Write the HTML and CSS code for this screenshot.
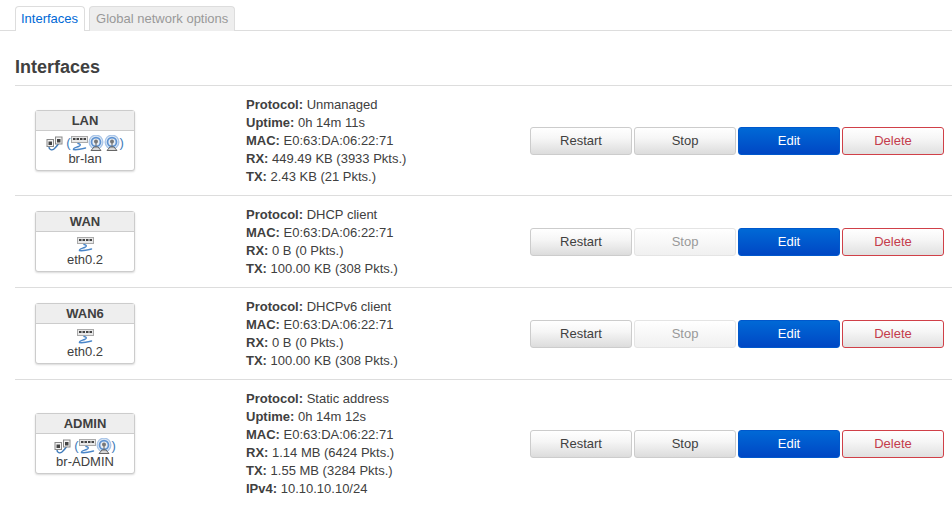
FILE: index.html
```html
<!DOCTYPE html>
<html lang="en">
<head>
    <meta charset="UTF-8">
    <title>Interfaces</title>
    <link rel="stylesheet" href="styles.css">
</head>
<body>
<svg class="defs" width="0" height="0">
    <symbol id="bridge" viewBox="0 0 17 15">
        <path d="M3 11c0 3 3 3.500 5 2s3-3 5-6" fill="none" stroke="#3d79b8" stroke-width="1.400"/>
        <rect x="1" y="3.500" width="6.500" height="7" fill="#f4f4f4" stroke="#888"/>
        <rect x="9.500" y="1" width="6.500" height="7" fill="#f4f4f4" stroke="#888"/>
        <rect x="2.500" y="5.500" width="3.500" height="3.500" fill="#444"/>
        <rect x="11" y="3" width="3.500" height="3.500" fill="#444"/>
    </symbol>
    <symbol id="switch" viewBox="0 0 17 15">
        <rect x=".5" y=".5" width="16" height="6" fill="#e8e8e8" stroke="#aaa"/>
        <path d="M2 3h2.500M5.500 3h2.500M9 3h2.500M12.500 3h2.500" stroke="#444" stroke-width="2"/>
        <path d="M7 7.500c3 .5 3 2 .5 3S2 12 2.500 13.500c3 .5 8-.5 12-1.500" fill="none" stroke="#4a86c8" stroke-width="1.500" stroke-linecap="round"/>
    </symbol>
    <symbol id="wifi" viewBox="0 0 16 16">
        <circle cx="8" cy="7" r="7.500" fill="#a9c5e8"/>
        <circle cx="8" cy="7" r="6.200" fill="#dce8f5"/>
        <circle cx="8" cy="7" r="5.300" fill="#5f93d2"/>
        <circle cx="8" cy="7" r="3.600" fill="#e8edf2"/>
        <circle cx="8" cy="6.500" r="2" fill="#777"/>
        <path d="M8 8v4M3 15.500l3-3.500h4l3 3.500z" fill="#d8d8d8" stroke="#666"/>
    </symbol>
</svg>
<div class="tabs">
    <a href="#" class="tab active">Interfaces</a>
    <a href="#" class="tab">Global network options</a>
</div>
<h3>Interfaces</h3>
<div class="list">
    <div class="row">
        <div class="badge">
            <div class="badge-title">LAN</div>
            <div class="badge-body">
                <div class="icons">
                    <svg class="ic-bridge"><use href="#bridge"/></svg>
                    <span class="paren first">(</span>
                    <svg class="ic-switch"><use href="#switch"/></svg>
                    <svg class="ic-wifi"><use href="#wifi"/></svg>
                    <svg class="ic-wifi"><use href="#wifi"/></svg>
                    <span class="paren">)</span>
                </div>
                br-lan
            </div>
        </div>
        <div class="info">
            <div><b>Protocol:</b> Unmanaged</div>
            <div><b>Uptime:</b> 0h 14m 11s</div>
            <div><b>MAC:</b> E0:63:DA:06:22:71</div>
            <div><b>RX:</b> 449.49 KB (3933 Pkts.)</div>
            <div><b>TX:</b> 2.43 KB (21 Pkts.)</div>
        </div>
        <div class="actions">
            <button class="btn">Restart</button>
            <button class="btn">Stop</button>
            <button class="btn edit">Edit</button>
            <button class="btn delete">Delete</button>
        </div>
    </div>
    <div class="row">
        <div class="badge">
            <div class="badge-title">WAN</div>
            <div class="badge-body">
                <div class="icons">
                    <svg class="ic-switch"><use href="#switch"/></svg>
                </div>
                eth0.2
            </div>
        </div>
        <div class="info">
            <div><b>Protocol:</b> DHCP client</div>
            <div><b>MAC:</b> E0:63:DA:06:22:71</div>
            <div><b>RX:</b> 0 B (0 Pkts.)</div>
            <div><b>TX:</b> 100.00 KB (308 Pkts.)</div>
        </div>
        <div class="actions">
            <button class="btn">Restart</button>
            <button class="btn" disabled>Stop</button>
            <button class="btn edit">Edit</button>
            <button class="btn delete">Delete</button>
        </div>
    </div>
    <div class="row">
        <div class="badge">
            <div class="badge-title">WAN6</div>
            <div class="badge-body">
                <div class="icons">
                    <svg class="ic-switch"><use href="#switch"/></svg>
                </div>
                eth0.2
            </div>
        </div>
        <div class="info">
            <div><b>Protocol:</b> DHCPv6 client</div>
            <div><b>MAC:</b> E0:63:DA:06:22:71</div>
            <div><b>RX:</b> 0 B (0 Pkts.)</div>
            <div><b>TX:</b> 100.00 KB (308 Pkts.)</div>
        </div>
        <div class="actions">
            <button class="btn">Restart</button>
            <button class="btn" disabled>Stop</button>
            <button class="btn edit">Edit</button>
            <button class="btn delete">Delete</button>
        </div>
    </div>
    <div class="row">
        <div class="badge">
            <div class="badge-title">ADMIN</div>
            <div class="badge-body">
                <div class="icons">
                    <svg class="ic-bridge"><use href="#bridge"/></svg>
                    <span class="paren first">(</span>
                    <svg class="ic-switch"><use href="#switch"/></svg>
                    <svg class="ic-wifi"><use href="#wifi"/></svg>
                    <span class="paren">)</span>
                </div>
                br-ADMIN
            </div>
        </div>
        <div class="info">
            <div><b>Protocol:</b> Static address</div>
            <div><b>Uptime:</b> 0h 14m 12s</div>
            <div><b>MAC:</b> E0:63:DA:06:22:71</div>
            <div><b>RX:</b> 1.14 MB (6424 Pkts.)</div>
            <div><b>TX:</b> 1.55 MB (3284 Pkts.)</div>
            <div><b>IPv4:</b> 10.10.10.10/24</div>
        </div>
        <div class="actions">
            <button class="btn">Restart</button>
            <button class="btn">Stop</button>
            <button class="btn edit">Edit</button>
            <button class="btn delete">Delete</button>
        </div>
    </div>
</div>
</body>
</html>
```

FILE: styles.css
```css
*{margin: 0;padding: 0;box-sizing: border-box;}
body{background: #fff;color: #404040;font-family: "Liberation Sans", Arial, sans-serif;font-size: 13px;line-height: 18px;overflow: hidden;}
a{text-decoration: none;}
.defs{position: absolute;}

.tabs{display: flex;gap: 4px;height: 31px;padding: 6px 0 0 15px;border-bottom: 1px solid #ddd;}
.tab{height: 25px;padding: 0 6px;line-height: 24px;color: #999;background: #eee;border: 1px solid #ddd;border-bottom: 0;border-radius: 4px 4px 0 0;}
.tab.active{padding-left: 5px;color: #0069d6;background: #fff;}

h3{margin: 0 0 0 15px;height: 54px;padding-top: 24px;font-size: 18px;line-height: 24px;color: #404040;}

.list{margin-left: 15px;}
.row{display: grid;grid-template-columns: 231px 1fr 414px;align-items: center;padding: 10px 8px 9px 0;border-top: 1px solid #ddd;}
.badge{width: 100px;margin: 0 0 2px 20px;background: #fff;border: 1px solid #ccc;border-radius: 3px;box-shadow: 0 1px 2px rgba(0,0,0,.15);text-align: center;}
.badge-title{height: 20px;line-height: 19px;font-weight: bold;background: #eee;border-bottom: 1px solid #ccc;}
.badge-body{padding: 3px 0;line-height: 16px;}
.icons{display: flex;justify-content: center;align-items: flex-end;height: 17px;}
.ic-bridge{width: 17px;height: 15px;}
.ic-switch{width: 17px;height: 15px;}
.ic-wifi{width: 16px;height: 16px;}
.paren{font-size: 13px;line-height: 16px;color: #3d79b8;}
.paren.first{margin-left: 3px;}

.info b{font-weight: bold;}

.actions{display: flex;gap: 2px;}
.btn{width: 102px;height: 28px;padding-bottom: 2px;font: 13px "Liberation Sans", Arial, sans-serif;color: #404040;background: linear-gradient(#fff, #f6f6f6 40%, #dcdcdc);border: 1px solid #ccc;border-radius: 3px;cursor: pointer;}
.btn:disabled{color: #999;background: linear-gradient(#fff, #f0f0f0);border-color: #e4e4e4;cursor: default;}
.btn.edit{color: #fff;background: linear-gradient(#0069d6, #0047c4);border-color: #0058cc;}
.btn.delete{color: #c43c4c;background: linear-gradient(#fff, #f6f6f6 40%, #e0e0e0);border-color: #d04048;}
```
